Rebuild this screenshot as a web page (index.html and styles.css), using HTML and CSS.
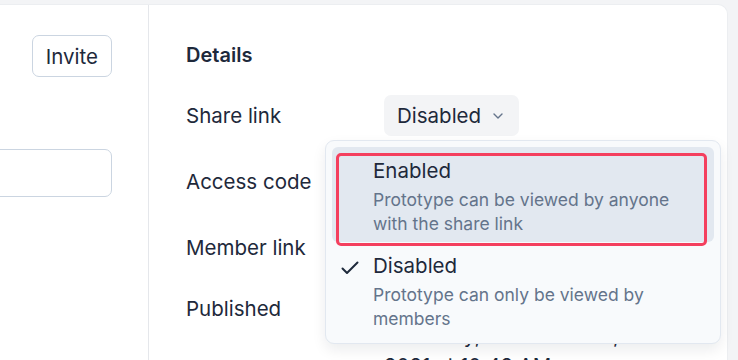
FILE: index.html
```html
<!doctype html>
<html>

<head>
  <title>Prototype settings</title>
  <link rel="stylesheet" href="styles.css">
</head>

<body>
  <div class="page">
    <div class="card">
      <div class="members">
        <button class="invite-button" type="button">Invite</button>
        <input class="member-search" type="text">
      </div>

      <div class="details">
        <h2 class="details-title">Details</h2>

        <div class="detail-row">
          <div class="detail-label">Share link</div>
          <div class="detail-value">
            <div class="select">
              <button class="select-trigger" type="button">
                Disabled
                <svg class="chevron" width="10" height="6" viewBox="0 0 10 6">
                  <path d="M1 1l4 4 4-4" fill="none" stroke="#64748b" stroke-width="1.4" stroke-linecap="round" stroke-linejoin="round"/>
                </svg>
              </button>

              <!-- open dropdown -->
              <div class="select-menu">
                <div class="select-option is-active">
                  <div class="option-title">Enabled</div>
                  <div class="option-text">Prototype can be viewed by anyone with the share link</div>
                </div>
                <div class="select-option">
                  <svg class="check" width="18" height="14" viewBox="0 0 18 14">
                    <path d="M1.5 7.5l4.5 4.5 10.5-10.5" fill="none" stroke="#1e293b" stroke-width="2" stroke-linecap="round" stroke-linejoin="round"/>
                  </svg>
                  <div class="option-title">Disabled</div>
                  <div class="option-text">Prototype can only be viewed by members</div>
                </div>
                <div class="highlight-box"></div>
              </div>
            </div>
          </div>
        </div>

        <div class="detail-row">
          <div class="detail-label">Access code</div>
          <div class="detail-value">Not set</div>
        </div>

        <div class="detail-row">
          <div class="detail-label">Member link</div>
          <div class="detail-value">Copy link</div>
        </div>

        <div class="detail-row">
          <div class="detail-label">Published</div>
          <div class="detail-value published-text">Last published on Thursday, November 18, 2021 at 10:42 AM</div>
        </div>
      </div>
    </div>
  </div>
</body>

</html>
```

FILE: styles.css
```css
body {
  margin: 0;
  background-color: #f3f4f6;
  font-family: 'Inter', 'Noto Sans', sans-serif;
  color: #1e293b;
  overflow: hidden;
}

.page {
  display: flex;
  height: 360px;
  padding: 5px 11px 0 0;
  box-sizing: border-box;
  overflow: hidden;
}

.card {
  flex: 1;
  display: flex;
  margin-left: -12px;
  background-color: #fff;
  border-radius: 0 9px 0 0;
  box-shadow: 0 0 0 1px #eceef1;
}

/* left column */
.members {
  width: 161px;
  flex-shrink: 0;
  display: flex;
  flex-direction: column;
  align-items: flex-end;
  padding: 30px 36px 0 0;
  box-sizing: border-box;
  border-right: 1px solid #e5e7eb;
  overflow: hidden;
}

.invite-button {
  height: 42px;
  padding: 0 13px;
  border: 1px solid #cbd5e1;
  border-radius: 7px;
  background-color: #fff;
  font-family: inherit;
  font-size: 20.5px;
  color: #1e293b;
}

.member-search {
  width: 180px;
  height: 48px;
  margin-top: 72px;
  box-sizing: border-box;
  border: 1px solid #cbd5e1;
  border-radius: 7px;
  flex-shrink: 0;
}

/* right column */
.details {
  flex: 1;
  padding: 36px 0 0 37px;
}

.details-title {
  margin: 0 0 26px;
  font-size: 20px;
  font-weight: 600;
  line-height: 28px;
}

.detail-row {
  display: grid;
  grid-template-columns: 198px 1fr;
  align-items: start;
  font-size: 20.5px;
  line-height: 29px;
}

.detail-row + .detail-row {
  margin-top: 37px;
}

.detail-row:first-of-type .detail-label {
  padding-top: 6px;
}

.detail-row:nth-of-type(2) {
  margin-top: 31px;
}

.detail-row:last-child {
  margin-top: 32px;
}

.published-text {
  width: 250px;
  margin-top: -3px;
  line-height: 30px;
}

/* select */
.select {
  position: relative;
}

.select-trigger {
  display: flex;
  align-items: center;
  gap: 12px;
  height: 41px;
  padding: 0 16px 0 13px;
  border: none;
  border-radius: 7px;
  background-color: #f3f4f6;
  font-family: inherit;
  font-size: 20.5px;
  color: #1e293b;
}

.select-menu {
  position: absolute;
  top: 45px;
  left: -59px;
  width: 396px;
  padding: 6px;
  box-sizing: border-box;
  background-color: #f8fafc;
  border: 1px solid #e2e8f0;
  border-radius: 9px;
  box-shadow: 0 6px 14px rgba(15, 23, 42, 0.08);
  z-index: 2;
}

.select-option {
  position: relative;
  padding: 12px 12px 6px 41px;
  border-radius: 6px;
}

.select-option.is-active {
  background-color: #e2e8f0;
}

.option-title {
  font-size: 20.5px;
  line-height: 24px;
  color: #1e293b;
}

.option-text {
  margin-top: 5px;
  font-size: 17.5px;
  line-height: 24px;
  color: #64748b;
}

.check {
  position: absolute;
  left: 9px;
  top: 19px;
}

/* red annotation outline */
.highlight-box {
  position: absolute;
  top: 12px;
  left: 10px;
  width: 371px;
  height: 93px;
  box-sizing: border-box;
  border: 3px solid #f43f5e;
  border-radius: 5px;
}
```
